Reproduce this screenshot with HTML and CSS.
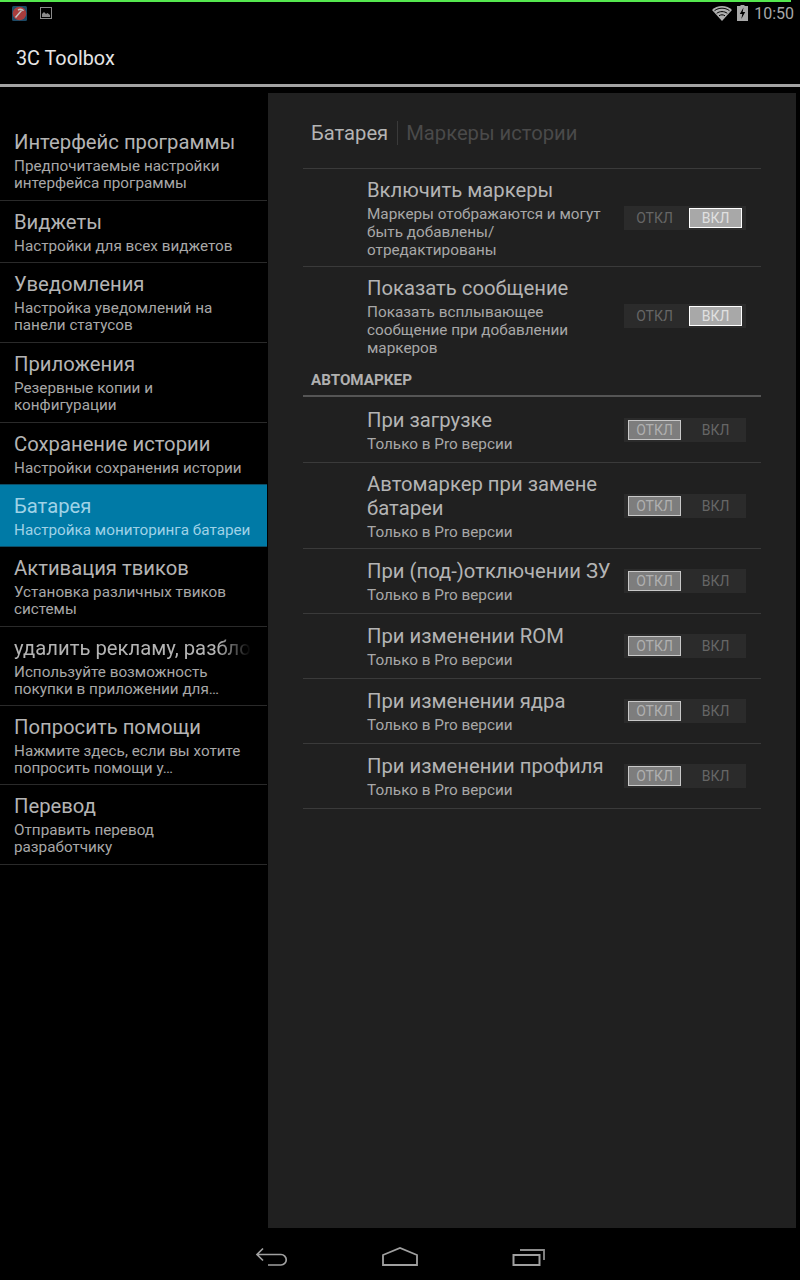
FILE: index.html
```html
<!DOCTYPE html>
<html lang="ru">
<head>
<meta charset="utf-8">
<title>3C Toolbox</title>
<link rel="stylesheet" href="styles.css">
</head>
<body>
<div class="screen">
  <div class="progress"></div>
  <header class="status">
    <div class="status-left">
      <svg width="15" height="15" viewBox="0 0 15 15"><rect width="15" height="15" rx="1.500" fill="#1d4a66"/><circle cx="7.500" cy="7.500" r="6.800" fill="#a83c3c"/><path d="M3.500 11.500 9.500 4.500M6 4c2-1 4-.8 5.500.8" stroke="#c4c4c4" stroke-width="1.500" fill="none"/></svg>
      <svg width="12" height="12" viewBox="0 0 12 12"><rect x=".5" y=".5" width="11" height="11" fill="none" stroke="#8a8a8a"/><path d="M2 10V7l2-2 2 2 1.500-1L10 8v2z" fill="#8a8a8a"/></svg>
    </div>
    <div class="status-right">
      <svg width="20" height="15" viewBox="0 0 20 15"><path d="M10 15 0 4C2.600 1.500 6.100 0 10 0s7.400 1.500 10 4z" fill="#b0b0b0"/><path d="M2.500 4.700c2.100-1.600 4.700-2.500 7.500-2.500s5.400.9 7.500 2.500M4.700 7.300c1.500-1.100 3.300-1.700 5.300-1.700s3.800.6 5.300 1.700M7 9.800c.9-.6 2-1 3-1s2.100.4 3 1" stroke="#000" stroke-width="1" fill="none"/></svg>
      <svg width="11" height="16" viewBox="0 0 11 16"><path d="M3.500 0h4v1H11v15H0V1h3.500z" fill="#a8a8a8"/><path d="M6.500 2.500 2.800 9H5.300L4.300 14 8.200 7H5.700z" fill="#000"/></svg>
      <span class="clock">10:50</span>
    </div>
  </header>
  <div class="actionbar">3C Toolbox</div>
  <main class="content">
    <nav class="sidebar">
      <a class="item wrap"><span class="item-title">Интерфейс программы</span><span class="item-sub">Предпочитаемые настройки<br>интерфейса программы</span></a>
      <a class="item"><span class="item-title">Виджеты</span><span class="item-sub">Настройки для всех виджетов</span></a>
      <a class="item wrap"><span class="item-title">Уведомления</span><span class="item-sub">Настройка уведомлений на<br>панели статусов</span></a>
      <a class="item wrap"><span class="item-title">Приложения</span><span class="item-sub">Резервные копии и<br>конфигурации</span></a>
      <a class="item"><span class="item-title">Сохранение истории</span><span class="item-sub">Настройки сохранения истории</span></a>
      <a class="item selected"><span class="item-title">Батарея</span><span class="item-sub">Настройка мониторинга батареи</span></a>
      <a class="item wrap"><span class="item-title">Активация твиков</span><span class="item-sub">Установка различных твиков<br>системы</span></a>
      <a class="item"><span class="item-title fade">удалить рекламу, разбло</span><span class="item-sub">Используйте возможность<br>покупки в приложении для…</span></a>
      <a class="item"><span class="item-title">Попросить помощи</span><span class="item-sub">Нажмите здесь, если вы хотите<br>попросить помощи у…</span></a>
      <a class="item wrap"><span class="item-title">Перевод</span><span class="item-sub">Отправить перевод<br>разработчику</span></a>
    </nav>
    <section class="panel">
      <div class="tabs">
        <span class="tab active">Батарея</span>
        <span class="tab-sep"></span>
        <span class="tab">Маркеры истории</span>
      </div>
      <div class="row">
        <div class="row-text"><div class="row-title">Включить маркеры</div><div class="row-sub">Маркеры отображаются и могут<br>быть добавлены/<br>отредактированы</div></div>
        <div class="toggle"><span class="opt">ОТКЛ</span><span class="opt on">ВКЛ</span></div>
      </div>
      <div class="row no-line">
        <div class="row-text"><div class="row-title">Показать сообщение</div><div class="row-sub">Показать всплывающее<br>сообщение при добавлении<br>маркеров</div></div>
        <div class="toggle"><span class="opt">ОТКЛ</span><span class="opt on">ВКЛ</span></div>
      </div>
      <h2 class="section">АВТОМАРКЕР</h2>
      <div class="row single">
        <div class="row-text"><div class="row-title">При загрузке</div><div class="row-sub">Только в Pro версии</div></div>
        <div class="toggle"><span class="opt off">ОТКЛ</span><span class="opt">ВКЛ</span></div>
      </div>
      <div class="row">
        <div class="row-text"><div class="row-title">Автомаркер при замене<br>батареи</div><div class="row-sub">Только в Pro версии</div></div>
        <div class="toggle"><span class="opt off">ОТКЛ</span><span class="opt">ВКЛ</span></div>
      </div>
      <div class="row single">
        <div class="row-text"><div class="row-title">При (под-)отключении ЗУ</div><div class="row-sub">Только в Pro версии</div></div>
        <div class="toggle"><span class="opt off">ОТКЛ</span><span class="opt">ВКЛ</span></div>
      </div>
      <div class="row single">
        <div class="row-text"><div class="row-title">При изменении ROM</div><div class="row-sub">Только в Pro версии</div></div>
        <div class="toggle"><span class="opt off">ОТКЛ</span><span class="opt">ВКЛ</span></div>
      </div>
      <div class="row single">
        <div class="row-text"><div class="row-title">При изменении ядра</div><div class="row-sub">Только в Pro версии</div></div>
        <div class="toggle"><span class="opt off">ОТКЛ</span><span class="opt">ВКЛ</span></div>
      </div>
      <div class="row single">
        <div class="row-text"><div class="row-title">При изменении профиля</div><div class="row-sub">Только в Pro версии</div></div>
        <div class="toggle"><span class="opt off">ОТКЛ</span><span class="opt">ВКЛ</span></div>
      </div>
    </section>
  </main>
  <footer class="navbar">
    <svg width="34" height="20" viewBox="0 0 34 20"><path d="M9 1.500 3 7.500l6 6M3 7.500h24a5.250 5.250 0 0 1 0 10.500H14" fill="none" stroke="#a0a0a0" stroke-width="1.700"/></svg>
    <svg width="36" height="20" viewBox="0 0 36 20"><path d="M1 18V8L18 1l17 7v10z" fill="none" stroke="#a0a0a0" stroke-width="1.800"/></svg>
    <svg width="34" height="20" viewBox="0 0 34 20"><path d="M1.500 8h26v10H1.500z" fill="none" stroke="#a0a0a0" stroke-width="2"/><path d="M8 3h24v10" fill="none" stroke="#8c8c8c" stroke-width="1.800"/></svg>
  </footer>
</div>
</body>
</html>
```
FILE: styles.css
```css
* { box-sizing: border-box; }
html, body { margin: 0; padding: 0; background: #000; }
.screen {
  width: 800px; height: 1280px; overflow: hidden;
  display: flex; flex-direction: column;
  background: #000;
  font-family: Roboto, "Noto Sans", sans-serif;
  color: #b4b4b4;
}
.progress { height: 2px; width: 791px; background: #55e84f; flex: none; }
.status {
  height: 22px; flex: none; display: flex; justify-content: space-between; align-items: center;
  padding: 0 6px 0 12px;
}
.status-left, .status-right { display: flex; align-items: center; }
.status-left { gap: 13px; }
.status-right { gap: 5px; }
.clock { font-size: 16px; color: #a8a8a8; margin-left: 1px; }
.actionbar {
  height: 60px; flex: none; display: flex; align-items: center; padding: 8px 0 0 16px;
  font-size: 19.8px; color: #e6e6e6;
}
.content {
  flex: 1; min-height: 0; display: flex;
  border-top: 3px solid #a3a3a3;
  padding-top: 6px;
}
.sidebar { width: 268px; flex: none; padding-top: 28px; border-right: 1px solid #000; }
.item {
  display: block; padding: 9px 14px 7px; border-bottom: 1px solid #2a2a2a;
}
.item.wrap { padding-bottom: 8px; }
.item-title { display: block; font-size: 20.25px; line-height: 24px; color: #b4b4b4; white-space: nowrap; }
.fade {
  width: 237px;
  -webkit-mask-image: linear-gradient(to right, #000 86%, transparent 100%);
  mask-image: linear-gradient(to right, #000 86%, transparent 100%);
}
.item-sub { display: block; margin-top: 4px; font-size: 15.25px; line-height: 17px; color: #a8a8a8; white-space: nowrap; }
.selected { background: #007aa6; border-top: 1px solid #0d4d66; border-bottom-color: #0d4d66; margin-top: -1px; }
.selected .item-title, .selected .item-sub { color: #9fd2e6; }
.panel {
  width: 528px; flex: none; background: #202020;
  padding: 0 35px; height: 1135px;
}
.tabs { height: 76px; display: flex; align-items: center; padding: 5px 0 0 8px; border-bottom: 1px solid #3a3a3a; }
.tab { font-size: 20.2px; color: #4a4a4a; }
.tab.active { color: #b4b4b4; }
.tab-sep { width: 1px; height: 24px; background: #3a3a3a; margin: 0 8px 0 9px; }
.row {
  display: flex; align-items: center; justify-content: space-between;
  padding: 9px 15px 7px 64px; border-bottom: 1px solid #3a3a3a; min-height: 65px;
}
.row.no-line { border-bottom: 0; }
.row.single .row-text { margin-top: -1px; }
.row-title { font-size: 20.25px; line-height: 24px; color: #b4b4b4; white-space: nowrap; }
.row-sub { margin-top: 3px; font-size: 15.3px; line-height: 18px; color: #a8a8a8; white-space: nowrap; }
.section {
  margin: 0 0 1px; padding: 7px 0 6px 8px; font-size: 15.2px; line-height: 18px; font-weight: 700; color: #b0b0b0;
  border-bottom: 2px solid #555;
}
.toggle {
  width: 122px; height: 24px; flex: none; display: flex; align-items: center; gap: 8px;
  padding: 0 4px; background: #2b2b2b; margin-top: -2px;
}
.opt {
  width: 53px; height: 20px; display: flex; align-items: center; justify-content: center;
  font-size: 14px; color: #666;
}
.opt.on { background: #a8a8a8; border: 1px solid #fff; color: #e0e0e0; }
.opt.off { background: #7d7d7d; border: 1px solid #c8c8c8; color: #b0b0b0; }
.navbar {
  height: 52px; flex: none; display: flex; align-items: center; justify-content: center; gap: 94px;
  padding-top: 6px;
}
```
